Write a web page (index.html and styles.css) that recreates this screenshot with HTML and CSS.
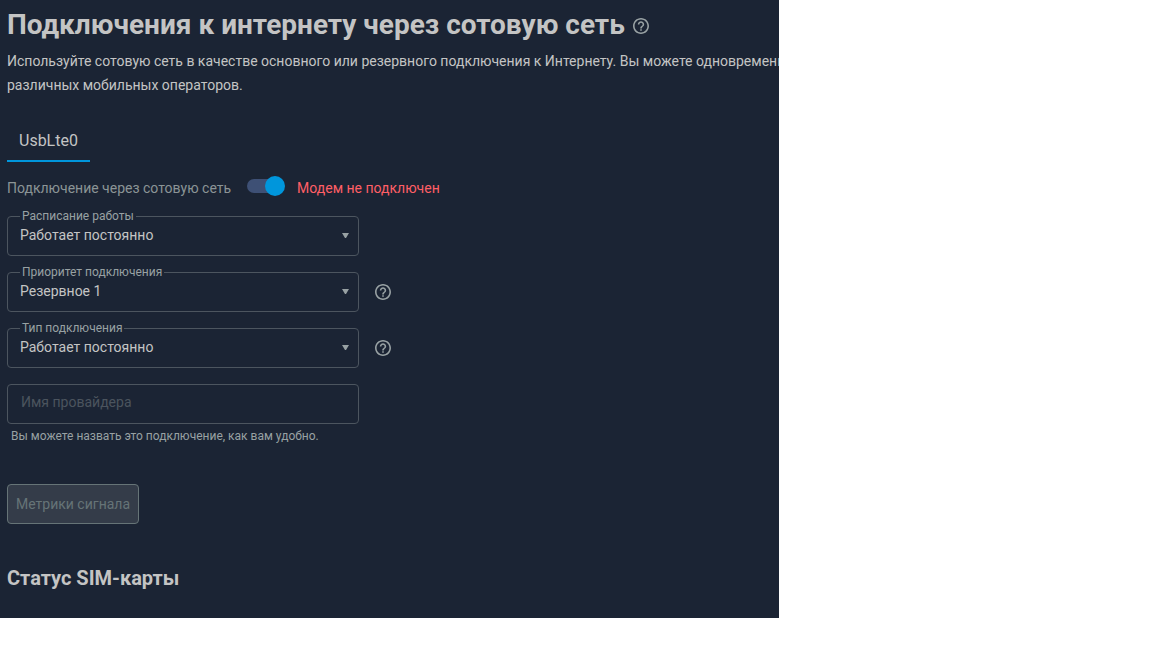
FILE: index.html
```html
<!DOCTYPE html>
<html lang="ru">
<head>
    <meta charset="UTF-8">
    <meta name="viewport" content="width=device-width, initial-scale=1.0">
    <title>Подключения к интернету через сотовую сеть</title>
    <link rel="stylesheet" href="styles.css">
</head>
<body>
    <svg class="sprite" aria-hidden="true">
        <symbol id="icon-help" viewBox="2 2 20 20">
            <path d="M11 18h2v-2h-2v2zm1-16C6.480 2 2 6.480 2 12s4.480 10 10 10 10-4.480 10-10S17.520 2 12 2zm0 18c-4.410 0-8-3.590-8-8s3.590-8 8-8 8 3.590 8 8-3.590 8-8 8zm0-14c-2.210 0-4 1.790-4 4h2c0-1.100.9-2 2-2s2 .9 2 2c0 2-3 1.750-3 5h2c0-2.250 3-2.500 3-5 0-2.210-1.790-4-4-4z"/>
        </symbol>
    </svg>

    <main class="page">
        <header class="page-header">
            <h1>Подключения к интернету через сотовую сеть</h1>
            <button class="help" type="button" aria-label="Справка"><svg><use href="#icon-help"/></svg></button>
        </header>

        <p class="description">Используйте сотовую сеть в качестве основного или резервного подключения к Интернету. Вы можете одновременно<br>различных мобильных операторов.</p>

        <nav class="tabs">
            <a class="tab" href="#">UsbLte0</a>
        </nav>

        <div class="toggle-row">
            <label for="enabled">Подключение через сотовую сеть</label>
            <input class="toggle" type="checkbox" id="enabled" checked>
            <span class="error">Модем не подключен</span>
        </div>

        <form class="form">
            <div class="row">
                <fieldset class="field">
                    <legend><label for="schedule">Расписание работы</label></legend>
                    <select id="schedule"><option>Работает постоянно</option></select>
                </fieldset>
            </div>
            <div class="row">
                <fieldset class="field">
                    <legend><label for="priority">Приоритет подключения</label></legend>
                    <select id="priority"><option>Резервное 1</option></select>
                </fieldset>
                <button class="help" type="button" aria-label="Справка"><svg><use href="#icon-help"/></svg></button>
            </div>
            <div class="row">
                <fieldset class="field">
                    <legend><label for="type">Тип подключения</label></legend>
                    <select id="type"><option>Работает постоянно</option></select>
                </fieldset>
                <button class="help" type="button" aria-label="Справка"><svg><use href="#icon-help"/></svg></button>
            </div>
            <input class="text-input" type="text" id="provider" placeholder="Имя провайдера" aria-label="Имя провайдера" aria-describedby="provider-hint">
            <p class="hint" id="provider-hint">Вы можете назвать это подключение, как вам удобно.</p>
            <button class="btn" type="button" disabled>Метрики сигнала</button>
        </form>

        <h2>Статус SIM-карты</h2>
    </main>
</body>
</html>
```

FILE: styles.css
```css
* {
    box-sizing: border-box;
}

body {
    margin: 0;
    background: #fff;
    font-family: Roboto, sans-serif;
    font-size: 14px;
}

.sprite {
    display: none;
}

.page {
    width: 67.6%;
    padding: 5px 0 26px 7px;
    overflow: hidden;
    background: #1b2434;
    color: #c4c4c4;
}

.page-header {
    display: flex;
    align-items: center;
    gap: 8px;
}

.page-header .help {
    padding-top: 2px;
}

h1 {
    margin: 0;
    font-size: 28px;
    font-weight: 700;
    line-height: 40px;
    white-space: nowrap;
}

.help {
    display: flex;
    padding: 0;
    border: none;
    background: none;
    color: #98a1a3;
    cursor: pointer;
}

.help svg {
    width: 16px;
    height: 16px;
    fill: currentColor;
}

.description {
    margin: 4px 0 24px;
    line-height: 24px;
    white-space: nowrap;
}

.tabs {
    display: flex;
}

.tab {
    padding: 8px 12px;
    border-bottom: 2px solid #0096dc;
    color: inherit;
    font-size: 16px;
    line-height: 23px;
    text-decoration: none;
}

.toggle-row {
    display: flex;
    align-items: center;
    gap: 16px;
    height: 52px;
    margin-bottom: -4px;
    color: #8b9496;
}

.toggle {
    appearance: none;
    display: flex;
    align-items: center;
    justify-content: flex-end;
    width: 34px;
    height: 14px;
    margin: 0 0 4px;
    border-radius: 7px;
    background: #3e5075;
    cursor: pointer;
}

.toggle::before {
    content: "";
    flex: none;
    width: 20px;
    height: 20px;
    margin-right: -4px;
    border-radius: 50%;
    background: #0096dc;
}

.toggle:not(:checked) {
    justify-content: flex-start;
}

.error {
    color: #ff5f66;
}

.row {
    display: flex;
    gap: 16px;
    margin-bottom: 10px;
}

.row .help {
    align-items: center;
    padding-top: 6px;
}

.field {
    width: 352px;
    margin: 0;
    padding: 0;
    border: 1px solid #4c555f;
    border-radius: 4px;
}

.field legend {
    margin-left: 12px;
    padding: 0 2px;
    color: #98a1a3;
    font-size: 12px;
    line-height: 13px;
}

.field select {
    appearance: none;
    display: block;
    width: 100%;
    height: 32px;
    padding: 0 12px 8px;
    border: none;
    background: url("data:image/svg+xml,%3Csvg xmlns='http://www.w3.org/2000/svg' viewBox='0 0 7 5'%3E%3Cpath fill='%2398a1a3' d='M0 0h7L4 5H3z'/%3E%3C/svg%3E") no-repeat right 9px top 10px / 7px 5px;
    color: #c4c4c4;
    font: 14px Roboto, sans-serif;
}

.text-input {
    display: block;
    width: 352px;
    height: 40px;
    margin-top: 16px;
    padding: 0 13px 4px;
    border: 1px solid #4c555f;
    border-radius: 4px;
    background: transparent;
    color: #c4c4c4;
    font: 14px Roboto, sans-serif;
}

.text-input::placeholder {
    color: #4b545e;
}

.hint {
    margin: 4px 4px 40px;
    color: #98a1a3;
    font-size: 12px;
    line-height: 16px;
}

.btn {
    height: 40px;
    padding: 0 8px;
    border: 1px solid #667477;
    border-radius: 4px;
    background: #343c49;
    color: #667477;
    font: 14px Roboto, sans-serif;
}

h2 {
    margin: 40px 0 0;
    font-size: 20px;
    font-weight: 700;
    line-height: 28px;
}
```
